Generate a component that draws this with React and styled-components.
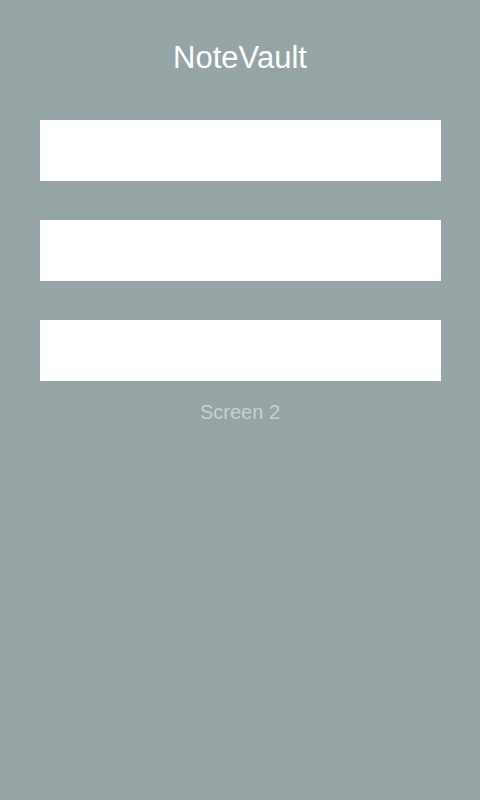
import React from "react";
import styled, { createGlobalStyle } from "styled-components";

const GlobalStyle = createGlobalStyle`
	html, body {
		margin: 0;
		padding: 0;
		background: #95a5a6;
		font-family: "Liberation Sans", Arial, sans-serif;
	}
`;

const Screen = styled.div`
	display: flex;
	flex-direction: column;
	align-items: center;
	min-height: 800px;
	padding-top: 41px;
	box-sizing: border-box;
`;

const Title = styled.h1`
	margin: 0 0 45px;
	font-size: 31px;
	font-weight: normal;
	line-height: 34px;
	color: #ffffff;
`;

const Form = styled.div`
	display: flex;
	flex-direction: column;
	gap: 39px;
	width: 401px;
	margin-left: 1px;
`;

const Field = styled.input`
	height: 61px;
	width: 100%;
	border: none;
	outline: none;
	padding: 0 12px;
	box-sizing: border-box;
	background: #ffffff;
	font-family: inherit;
	font-size: 18px;
`;

const Caption = styled.div`
	margin-top: 20px;
	font-size: 20px;
	line-height: 23px;
	color: rgba(255, 255, 255, 0.5);
`;

export default function App() {
	return (
		<>
			<GlobalStyle />
			<Screen>
				<Title>NoteVault</Title>
				<Form>
					<Field type='text' />
					<Field type='text' />
					<Field type='text' />
				</Form>
				<Caption>Screen 2</Caption>
			</Screen>
		</>
	);
}
